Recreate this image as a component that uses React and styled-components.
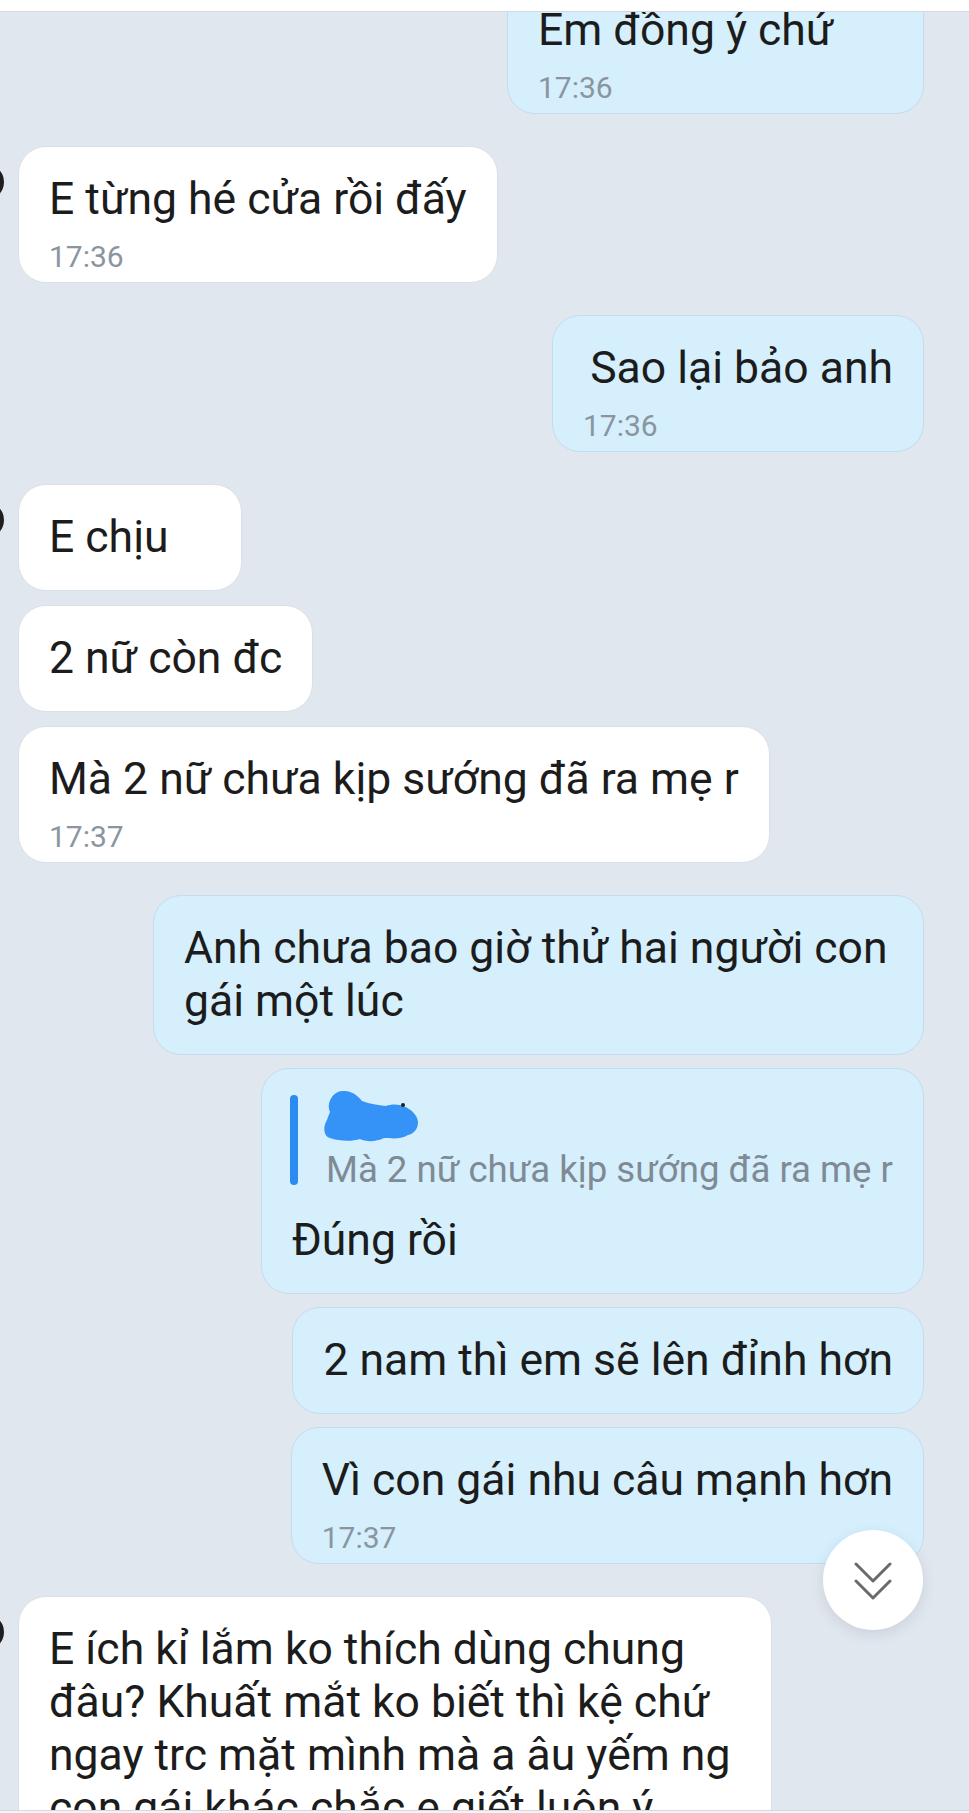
import styled, { createGlobalStyle } from "styled-components";

const GlobalStyle = createGlobalStyle`
  html, body {
    margin: 0;
    padding: 0;
    background: #e1e7ee;
  }
  * {
    box-sizing: border-box;
  }
`;

const messages = [
  { id: 1, mine: true, text: "Em đồng ý chứ", time: "17:36", gap: -35, minWidth: 417 },
  { id: 2, mine: false, avatar: true, text: "E từng hé cửa rồi đấy", time: "17:36", gap: 32 },
  { id: 3, mine: true, text: "Sao lại bảo anh", time: "17:36", gap: 32, minWidth: 372, alignText: "right" },
  { id: 4, mine: false, avatar: true, text: "E chịu", gap: 32, minWidth: 224 },
  { id: 5, mine: false, text: "2 nữ còn đc", gap: 14 },
  { id: 6, mine: false, text: "Mà 2 nữ chưa kịp sướng đã ra mẹ r", time: "17:37", gap: 14 },
  { id: 7, mine: true, text: "Anh chưa bao giờ thử hai người con gái một lúc", gap: 32 },
  {
    id: 8,
    mine: true,
    text: "Đúng rồi",
    gap: 13,
    reply: "Mà 2 nữ chưa kịp sướng đã ra mẹ r",
  },
  { id: 9, mine: true, text: "2 nam thì em sẽ lên đỉnh hơn", gap: 13 },
  { id: 10, mine: true, text: "Vì con gái nhu câu mạnh hơn", time: "17:37", gap: 13 },
  {
    id: 11,
    mine: false,
    avatar: true,
    text: "E ích kỉ lắm ko thích dùng chung đâu? Khuất mắt ko biết thì kệ chứ ngay trc mặt mình mà a âu yếm ng con gái khác chắc e giết luôn ý",
    gap: 32,
  },
];

const RedactedName = () => (
  <svg width="98" height="52" viewBox="0 0 98 52">
    <path
      d="M6 22 C2 14 8 2 18 1 C28 0 34 6 38 11 C46 14 54 15 62 16 C72 12 86 16 92 26 C97 34 92 44 84 45 C76 50 66 48 60 48 C52 52 42 52 36 49 C28 52 14 51 6 48 C-1 46 -1 36 3 30 C4 27 5 24 6 22 Z"
      fill="#3592f6"
    />
    <circle cx="79" cy="15" r="2" fill="#1d1d1d" />
  </svg>
);

const ChevronsDown = () => (
  <svg width="38" height="40" viewBox="0 0 38 40" fill="none">
    <path
      d="M2 3 L19 20 L36 3 M2 20 L19 37 L36 20"
      stroke="#6a6a6a"
      strokeWidth="3"
      strokeLinecap="round"
      strokeLinejoin="round"
    />
  </svg>
);

const App = () => {
  return (
    <>
      <GlobalStyle />
      <Screen>
        <TopBar />
        <ChatArea>
          {messages.map((m) =>
            m.mine ? (
              <RowOut key={m.id} $gap={m.gap}>
                <Bubble $mine $minWidth={m.minWidth}>
                  {m.reply && (
                    <Reply>
                      <ReplyBar />
                      <ReplyBody>
                        <RedactedName />
                        <ReplyText>{m.reply}</ReplyText>
                      </ReplyBody>
                    </Reply>
                  )}
                  <Text $align={m.alignText}>{m.text}</Text>
                  {m.time && <Time>{m.time}</Time>}
                </Bubble>
              </RowOut>
            ) : (
              <RowIn key={m.id} $gap={m.gap}>
                <Avatar $show={m.avatar} />
                <Bubble $minWidth={m.minWidth}>
                  <Text>{m.text}</Text>
                  {m.time && <Time>{m.time}</Time>}
                </Bubble>
              </RowIn>
            )
          )}
          <ScrollButton>
            <ChevronsDown />
          </ScrollButton>
        </ChatArea>
        <BottomBar />
      </Screen>
    </>
  );
};

const Screen = styled.div`
  width: 969px;
  height: 1813px;
  display: flex;
  flex-direction: column;
  overflow: hidden;
  background: #e1e7ee;
  font-family: Roboto, "Noto Sans", sans-serif;
`;
const TopBar = styled.div`
  height: 12px;
  flex-shrink: 0;
  background: #ffffff;
  border-bottom: 1px solid #d2d8de;
  position: relative;
  z-index: 2;
`;
const ChatArea = styled.div`
  flex: 1;
  position: relative;
  overflow: hidden;
  display: flex;
  flex-direction: column;
  padding-right: 45px;
`;
const RowOut = styled.div`
  display: flex;
  justify-content: flex-end;
  margin-top: ${(p) => p.$gap}px;
`;
const RowIn = styled.div`
  display: flex;
  align-items: flex-start;
  gap: 14px;
  margin-top: ${(p) => p.$gap}px;
  margin-left: -30px;
`;
const Avatar = styled.div`
  width: 36px;
  height: 36px;
  flex-shrink: 0;
  margin-top: 18px;
  margin-left: -2px;
  border-radius: 50%;
  background: #1e1e1e;
  visibility: ${(p) => (p.$show ? "visible" : "hidden")};
`;
const Bubble = styled.div`
  display: flex;
  flex-direction: column;
  width: fit-content;
  min-width: ${(p) => (p.$minWidth ? `${p.$minWidth}px` : "0")};
  max-width: ${(p) => (p.$mine ? "771px" : "754px")};
  padding: 26px 30px;
  border-radius: 28px;
  background: ${(p) => (p.$mine ? "#d5effd" : "#ffffff")};
  border: 1px solid ${(p) => (p.$mine ? "#c4dcec" : "#dae0e6")};
  &:has(> span:last-child) {
    padding-bottom: 7px;
  }
`;
const Text = styled.div`
  font-size: 44.5px;
  line-height: 53px;
  color: #1c1c1c;
  text-align: ${(p) => p.$align || "left"};
`;
const Time = styled.span`
  margin-top: 13px;
  font-size: 30px;
  line-height: 36px;
  color: #8a959f;
`;
const Reply = styled.div`
  display: flex;
  gap: 28px;
  margin-left: -2px;
  margin-bottom: 24px;
`;
const ReplyBar = styled.div`
  width: 8px;
  flex-shrink: 0;
  margin-bottom: 5px;
  border-radius: 4px;
  background: #2a8cf2;
`;
const ReplyBody = styled.div`
  display: flex;
  flex-direction: column;
  svg {
    display: block;
    height: 52px;
    margin: -5px 0 8px -2px;
  }
`;
const ReplyText = styled.div`
  font-size: 36.6px;
  line-height: 40px;
  color: #7f8a94;
  white-space: nowrap;
`;
const ScrollButton = styled.div`
  position: absolute;
  right: 46px;
  bottom: 180px;
  width: 100px;
  height: 100px;
  border-radius: 50%;
  background: #ffffff;
  box-shadow: 0 4px 14px rgba(40, 60, 80, 0.12);
  display: flex;
  align-items: center;
  justify-content: center;
  svg {
    margin-top: 2px;
  }
`;
const BottomBar = styled.div`
  height: 3px;
  flex-shrink: 0;
  background: #f3f4f6;
  border-top: 1px solid #d4d9de;
`;

export default App;
